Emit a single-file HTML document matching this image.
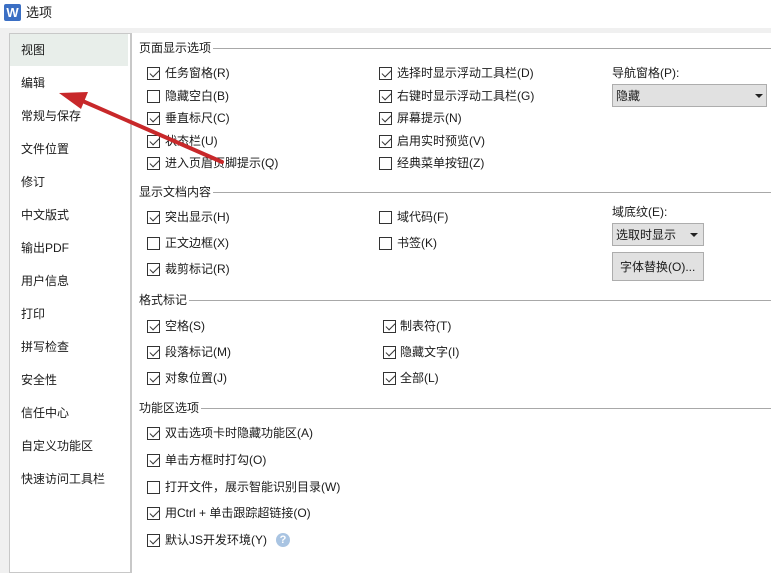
<!DOCTYPE html>
<html><head><meta charset="utf-8"><style>
*{margin:0;padding:0;box-sizing:border-box}
body{width:771px;height:560px;overflow:hidden;background:#f0f0f0;font-family:"Liberation Sans","Noto Sans CJK SC",sans-serif;font-size:12px;color:#1a1a1a;position:relative}
.a{position:absolute;white-space:nowrap;line-height:16px}
.title{position:absolute;left:0;top:0;width:771px;height:28px;background:#fff}
.side{position:absolute;left:9px;top:33px;width:122px;height:540px;background:#fff;border:1px solid #c8c8c8}
.main{position:absolute;left:131px;top:33px;width:650px;height:540px;background:#fff;border-left:1px solid #c8c8c8}
.sel{position:absolute;left:10px;top:34px;width:118px;height:32px;background:#e8eeea}
.cb{position:absolute;width:13px;height:13px;border:1px solid #333;background:#fff}
.cb.c::after{content:"";position:absolute;left:3.5px;top:0px;width:4px;height:8px;border-right:1.2px solid #333;border-bottom:1.2px solid #333;transform:rotate(45deg)}
.hd{position:absolute;height:1px;background:#a8a8a8;right:0}
.sb{position:absolute;background:#e1e1e1;border:1px solid #adadad}
.tri{position:absolute;width:0;height:0;border-left:4px solid transparent;border-right:4px solid transparent;border-top:4px solid #222}
</style></head><body>
<div class="title"></div>
<div class="a" style="left:4px;top:4px;width:17px;height:17px;background:#3b6fc4;color:#fff;font-weight:bold;font-size:13px;text-align:center;line-height:17px;border-radius:2px">W</div>
<div class="a" style="left:26px;top:5px;font-size:13px">选项</div>
<div class="side"></div>
<div class="main"></div>
<div class="sel"></div>
<div class="a" style="left:21px;top:42px">视图</div>
<div class="a" style="left:21px;top:75px">编辑</div>
<div class="a" style="left:21px;top:108px">常规与保存</div>
<div class="a" style="left:21px;top:141px">文件位置</div>
<div class="a" style="left:21px;top:174px">修订</div>
<div class="a" style="left:21px;top:207px">中文版式</div>
<div class="a" style="left:21px;top:240px">输出PDF</div>
<div class="a" style="left:21px;top:273px">用户信息</div>
<div class="a" style="left:21px;top:306px">打印</div>
<div class="a" style="left:21px;top:339px">拼写检查</div>
<div class="a" style="left:21px;top:372px">安全性</div>
<div class="a" style="left:21px;top:405px">信任中心</div>
<div class="a" style="left:21px;top:438px">自定义功能区</div>
<div class="a" style="left:21px;top:471px">快速访问工具栏</div>

<div class="a" style="left:139px;top:40px">页面显示选项</div><div class="hd" style="left:213px;top:48px"></div>
<div class="a" style="left:139px;top:184px">显示文档内容</div><div class="hd" style="left:213px;top:192px"></div>
<div class="a" style="left:139px;top:292px">格式标记</div><div class="hd" style="left:189px;top:300px"></div>
<div class="a" style="left:139px;top:400px">功能区选项</div><div class="hd" style="left:201px;top:408px"></div>

<div class="cb c" style="left:147px;top:67px"></div><div class="a" style="left:165px;top:65px">任务窗格(R)</div>
<div class="cb" style="left:147px;top:90px"></div><div class="a" style="left:165px;top:88px">隐藏空白(B)</div>
<div class="cb c" style="left:147px;top:112px"></div><div class="a" style="left:165px;top:110px">垂直标尺(C)</div>
<div class="cb c" style="left:147px;top:135px"></div><div class="a" style="left:165px;top:133px">状态栏(U)</div>
<div class="cb c" style="left:147px;top:157px"></div><div class="a" style="left:165px;top:155px">进入页眉页脚提示(Q)</div>
<div class="cb c" style="left:379px;top:67px"></div><div class="a" style="left:397px;top:65px">选择时显示浮动工具栏(D)</div>
<div class="cb c" style="left:379px;top:90px"></div><div class="a" style="left:397px;top:88px">右键时显示浮动工具栏(G)</div>
<div class="cb c" style="left:379px;top:112px"></div><div class="a" style="left:397px;top:110px">屏幕提示(N)</div>
<div class="cb c" style="left:379px;top:135px"></div><div class="a" style="left:397px;top:133px">启用实时预览(V)</div>
<div class="cb" style="left:379px;top:157px"></div><div class="a" style="left:397px;top:155px">经典菜单按钮(Z)</div>
<div class="a" style="left:612px;top:65px">导航窗格(P):</div>
<div class="sb" style="left:612px;top:84px;width:155px;height:23px"></div><div class="a" style="left:616px;top:88px">隐藏</div><div class="tri" style="left:755px;top:94px"></div>

<div class="cb c" style="left:147px;top:211px"></div><div class="a" style="left:165px;top:209px">突出显示(H)</div>
<div class="cb" style="left:147px;top:237px"></div><div class="a" style="left:165px;top:235px">正文边框(X)</div>
<div class="cb c" style="left:147px;top:263px"></div><div class="a" style="left:165px;top:261px">裁剪标记(R)</div>
<div class="cb" style="left:379px;top:211px"></div><div class="a" style="left:397px;top:209px">域代码(F)</div>
<div class="cb" style="left:379px;top:237px"></div><div class="a" style="left:397px;top:235px">书签(K)</div>
<div class="a" style="left:612px;top:204px">域底纹(E):</div>
<div class="sb" style="left:612px;top:223px;width:92px;height:23px"></div><div class="a" style="left:616px;top:227px">选取时显示</div><div class="tri" style="left:690px;top:233px"></div>
<div class="sb" style="left:612px;top:252px;width:92px;height:29px"></div><div class="a" style="left:620px;top:259px">字体替换(O)...</div>

<div class="cb c" style="left:147px;top:320px"></div><div class="a" style="left:165px;top:318px">空格(S)</div>
<div class="cb c" style="left:147px;top:346px"></div><div class="a" style="left:165px;top:344px">段落标记(M)</div>
<div class="cb c" style="left:147px;top:372px"></div><div class="a" style="left:165px;top:370px">对象位置(J)</div>
<div class="cb c" style="left:383px;top:320px"></div><div class="a" style="left:400px;top:318px">制表符(T)</div>
<div class="cb c" style="left:383px;top:346px"></div><div class="a" style="left:400px;top:344px">隐藏文字(I)</div>
<div class="cb c" style="left:383px;top:372px"></div><div class="a" style="left:400px;top:370px">全部(L)</div>

<div class="cb c" style="left:147px;top:427px"></div><div class="a" style="left:165px;top:425px">双击选项卡时隐藏功能区(A)</div>
<div class="cb c" style="left:147px;top:454px"></div><div class="a" style="left:165px;top:452px">单击方框时打勾(O)</div>
<div class="cb" style="left:147px;top:481px"></div><div class="a" style="left:165px;top:479px">打开文件，展示智能识别目录(W)</div>
<div class="cb c" style="left:147px;top:507px"></div><div class="a" style="left:165px;top:505px">用Ctrl + 单击跟踪超链接(O)</div>
<div class="cb c" style="left:147px;top:534px"></div><div class="a" style="left:165px;top:532px">默认JS开发环境(Y)</div>
<div class="a" style="left:276px;top:533px;width:14px;height:14px;border-radius:50%;background:#a9c4e2;color:#fff;font-size:11px;font-weight:bold;text-align:center;line-height:14px">?</div>

<svg style="position:absolute;left:0;top:0" width="771" height="560"><line x1="222" y1="162" x2="78" y2="99" stroke="#c8282a" stroke-width="4" stroke-linecap="round"/><polygon points="59,93 88,92 81,109" fill="#c8282a"/></svg>
</body></html>
